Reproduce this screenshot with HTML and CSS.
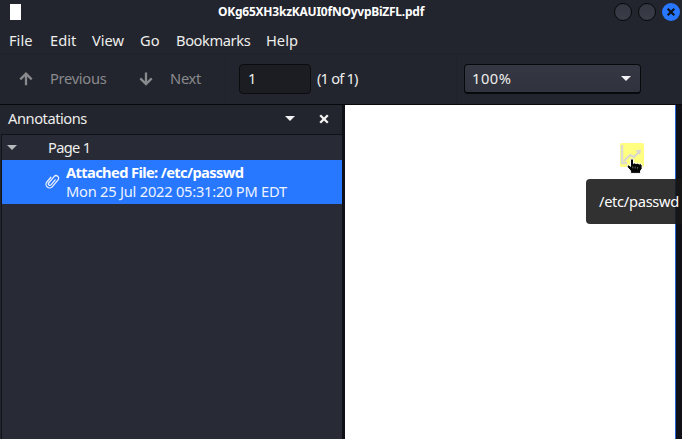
FILE: index.html
```html
<!DOCTYPE html>
<html lang="en">
<head>
<meta charset="utf-8">
<title>OKg65XH3kzKAUI0fNOyvpBiZFL.pdf</title>
<link rel="stylesheet" href="styles.css">
</head>
<body>
<div class="window">
  <header class="titlebar">
    <span class="app-icon"></span>
    <h1 class="title">OKg65XH3kzKAUI0fNOyvpBiZFL.pdf</h1>
    <div class="controls">
      <span class="control"></span>
      <span class="control"></span>
      <span class="control close"><svg width="18" height="18" viewBox="0 0 18 18"><path d="M5.7 5.7l6.6 6.6M12.3 5.7l-6.6 6.6" stroke="#10131a" stroke-width="2.2"/></svg></span>
    </div>
  </header>
  <nav class="menubar">
    <span class="file">File</span><span class="edit">Edit</span><span class="view">View</span><span class="go">Go</span><span class="bookmarks">Bookmarks</span><span class="help">Help</span>
  </nav>
  <div class="toolbar">
    <div class="nav-group">
      <svg class="arrow" width="14" height="14" viewBox="0 0 14 14"><path d="M7 13.2V2M1.3 7.4L7 1.7l5.7 5.7"/></svg>
      <span class="previous">Previous</span>
      <svg class="arrow" width="14" height="14" viewBox="0 0 14 14"><path d="M7 .5V12M1.3 6.4L7 12.1l5.7-5.7"/></svg>
      <span class="next">Next</span>
    </div>
    <div class="page-group">
      <div class="page-input">1</div>
      <span class="count">(1 of 1)</span>
    </div>
    <div class="zoom-group">
      <div class="zoom">
        <span class="zoom-value">100%</span>
        <svg width="10" height="5" viewBox="0 0 10 5"><path d="M0 0h10L5 5z" fill="#f2f2f2"/></svg>
      </div>
    </div>
  </div>
  <main class="content">
    <aside class="sidebar">
      <div class="side-header">
        <span class="side-title">Annotations</span>
        <svg class="side-menu" width="10" height="5" viewBox="0 0 10 5"><path d="M0 0h10L5 5z" fill="#f2f2f2"/></svg>
        <svg class="side-close" width="10" height="10" viewBox="0 0 10 10"><path d="M1.2 1.2l7.6 7.6M8.8 1.2L1.2 8.8" stroke="#f2f2f2" stroke-width="2.3"/></svg>
      </div>
      <div class="tree">
        <div class="page-row">
          <svg width="10" height="5" viewBox="0 0 10 5"><path d="M0 0h10L5 5z" fill="#b8b9bc"/></svg>
          <span class="page-name">Page 1</span>
        </div>
        <div class="attachment">
          <svg class="clip" width="16" height="17" viewBox="0 0 16 17"><g transform="rotate(40 8 8.5)" fill="none" stroke="#e9f0ff" stroke-width="1.3" stroke-linecap="round"><path d="M4.4 6v6.2a3.6 3.6 0 0 0 7.2 0V3.4a2.6 2.6 0 0 0-5.2 0v8.4a1.5 1.5 0 0 0 3 0V5.2"/></g></svg>
          <div class="details">
            <strong>Attached File: /etc/passwd</strong>
            <span class="date">Mon 25 Jul 2022 05:31:20 PM EDT</span>
          </div>
        </div>
      </div>
    </aside>
    <section class="viewer">
      <div class="paper"></div>
      <svg class="note" width="28" height="34" viewBox="0 0 28 34">
        <rect x="2" y="2" width="24" height="24" rx="1.5" fill="#ffff80"/>
        <path d="M4 4v18h5" fill="none" stroke="#dddcd0" stroke-width="2.5"/>
        <path d="M6 20l6-6 4 2 6-6" fill="none" stroke="#d8d7d1" stroke-width="2"/>
        <path d="M17.5 9.5l5.5-1-1 5.5z" fill="#d8d7d1"/>
        <path d="M12.5 18.5q1.5-1.5 3 0v4l1-.6 1.7.7 1.4-.4 1.6.8 1.5-.2 1.4 1.3v3.7l-1.5 2v2.6h-10v-2.5l-3.5-4q0-2 1.6-2l1.8 1.5z" fill="#050505" stroke="#fff" stroke-width="1"/>
        <path d="M14.8 25.3v2m2.4-1.6v1.8m2.4-1.6v1.8" stroke="#aaa" stroke-width=".6"/>
      </svg>
      <div class="tooltip"><span>/etc/passwd</span></div>
    </section>
  </main>
</div>
</body>
</html>
```
FILE: styles.css
```css
* { box-sizing: border-box; }
body { margin: 0; overflow: hidden; background: #23252e; color: #eeeeec; font: 14.67px/20px "Noto Sans", sans-serif; }
svg { display: block; flex: none; }
span, strong { white-space: nowrap; }
.window { width: 682px; height: 439px; display: flex; flex-direction: column; overflow: hidden; }
.titlebar { height: 24px; display: flex; padding-left: 10px; flex: none; }
.app-icon { width: 11px; height: 16px; margin-top: 4px; background: #fff; }
.title { width: 207px; margin: 2px 0 0 197px; font-size: 12px; line-height: 20px; font-weight: 700; letter-spacing: -.24px; color: #fff; white-space: nowrap; }
.controls { display: flex; gap: 6px; margin: 3px 2px 0 auto; }
.control { width: 18px; height: 18px; border: 1px solid #08090c; border-radius: 50%; background: linear-gradient(#343741, #3a3d48); }
.close { background: #2777ff; border: 0; }
.menubar { height: 30px; flex: none; display: flex; padding: 6px 0 0 9px; border-bottom: 1px solid #20222a; }
.file { width: 41px; }
.edit { width: 42px; }
.view { width: 48px; }
.go { width: 36px; }
.bookmarks { width: 90px; letter-spacing: -.4px; }
.toolbar { height: 51px; flex: none; display: flex; border-bottom: 1px solid #08090c; }
.nav-group { width: 226px; display: flex; align-items: center; padding-left: 19px; border-right: 1px solid #20222a; color: #898a8d; }
.arrow { margin-right: 17px; fill: none; stroke: #898a8d; stroke-width: 2.3; }
.previous { width: 89px; letter-spacing: -.3px; }
.previous, .next, .count { padding-bottom: 2px; }
.next { letter-spacing: -.25px; }
.page-group { width: 231px; display: flex; align-items: center; padding-left: 13px; border-right: 1px solid #20222a; }
.page-input { width: 72px; height: 30px; padding: 3px 8px; background: #1b1d22; border: 1px solid #0b0c10; border-radius: 4px; }
.count { margin-left: 6px; letter-spacing: -.8px; }
.zoom-group { padding: 10px 0 0 7px; }
.zoom { width: 177px; height: 30px; display: flex; align-items: center; justify-content: space-between; padding: 0 9px 1px 7px; border: 1px solid #08090c; border-bottom-width: 2px; border-radius: 4px; background: linear-gradient(#353843, #30333e); }
.zoom-value { letter-spacing: .5px; }
.content { flex: 1; min-height: 0; display: flex; }
.sidebar { width: 342px; display: flex; flex-direction: column; }
.side-header { height: 29px; display: flex; align-items: center; padding: 0 0 2px 8px; }
.side-title { width: 277px; padding-bottom: 1px; letter-spacing: -.45px; }
.side-close { margin-left: 24px; }
.tree { flex: 1; margin-left: 1px; border: 1px solid #111218; border-width: 1px 0 0 1px; background: #282a35; }
.page-row { height: 25px; display: flex; align-items: center; gap: 31px; padding-left: 5px; }
.page-name { padding-bottom: 2px; letter-spacing: -.7px; }
.attachment { height: 44px; display: flex; padding: 3px 0 0 42px; background: #2777ff; color: #fff; }
.clip { margin-top: 10px; }
.details { display: flex; flex-direction: column; margin-left: 6px; line-height: 19px; }
.details strong { font-weight: 700; letter-spacing: -.62px; }
.date { color: #edf3ff; letter-spacing: -.23px; }
.viewer { width: 340px; position: relative; background: #101116; padding-left: 3px; }
.paper { width: 331px; height: 100%; background: #fff; border-right: 1px solid #2464d8; }
.note { position: absolute; left: 276px; top: 36px; }
.tooltip { position: absolute; left: 244px; top: 74px; width: 104px; height: 45px; padding: 12px 0 0 13px; border-radius: 4px; background: rgba(24, 24, 24, .89); color: #fff; letter-spacing: -.3px; }
```
